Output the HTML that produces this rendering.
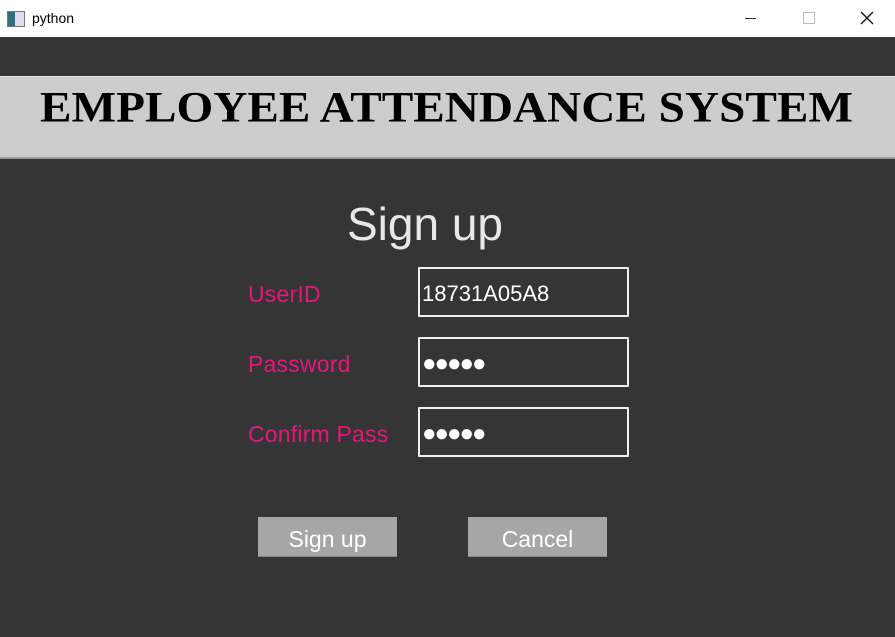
<!DOCTYPE html>
<html><head><style>
body{margin:0;width:895px;height:637px;background:#353535;position:relative;overflow:hidden;font-family:"DejaVu Sans","Liberation Sans",sans-serif}
.tb{position:absolute;left:0;top:0;width:895px;height:37px;background:#fff}
.abs{position:absolute}
.lbl{position:absolute;left:248px;color:#e5177d;font-size:23px;letter-spacing:0.2px;font-family:"Liberation Sans",sans-serif}
.inp{position:absolute;left:418px;width:205px;height:46px;border:2px solid #f0f0f0;border-radius:1px;color:#fff;font-size:22px;font-family:"Liberation Sans",sans-serif;line-height:50px;box-sizing:content-box;padding-left:2px}
.dots{font-size:24px;letter-spacing:-2px}
.btn{position:absolute;top:517px;width:139px;height:39px;background:#a6a6a6;border-bottom:1px solid #888;color:#fff;font-size:23px;text-align:center;line-height:44px;font-family:"Liberation Sans",sans-serif}
</style></head><body>
<div class="tb">
 <div class="abs" style="left:7px;top:11px;width:16px;height:14px;border:1px solid #777;background:linear-gradient(90deg,#2e6f7a 0 45%,#dde 45%)"></div>
 <div class="abs" style="left:32px;top:10px;font-size:14px;font-family:'Liberation Sans',sans-serif;color:#000">python</div>
 <div class="abs" style="left:745px;top:18px;width:11px;height:1px;background:#333"></div>
 <div class="abs" style="left:803px;top:12px;width:10px;height:10px;border:1px solid #bbb"></div>
 <svg class="abs" style="left:860px;top:11px" width="14" height="14"><path d="M1 1L13 13M13 1L1 13" stroke="#111" stroke-width="1.3"/></svg>
</div>
<div class="abs" style="left:0;top:76px;width:895px;height:80px;background:#cdcdcd;border-top:1px solid #e6e6e6;border-bottom:2px solid #9a9a9a"></div>
<svg class="abs" style="left:0;top:76px" width="895" height="80"><text x="40" y="47" textLength="813" lengthAdjust="spacingAndGlyphs" font-family="Liberation Serif,serif" font-weight="bold" font-size="42" fill="#000" transform="translate(0,-3) scale(1,1.03)">EMPLOYEE ATTENDANCE SYSTEM</text></svg>
<div class="abs" style="left:347px;top:197px;color:#e8e8e8;font-size:46px;font-family:'Liberation Sans',sans-serif">Sign up</div>
<div class="lbl" style="top:281px">UserID</div>
<div class="lbl" style="top:351px">Password</div>
<div class="lbl" style="top:421px">Confirm Pass</div>
<div class="inp" style="top:267px">18731A05A8</div>
<div class="inp dots" style="top:337px">●●●●●</div>
<div class="inp dots" style="top:407px">●●●●●</div>
<div class="btn" style="left:258px">Sign up</div>
<div class="btn" style="left:468px">Cancel</div>
</body></html>
